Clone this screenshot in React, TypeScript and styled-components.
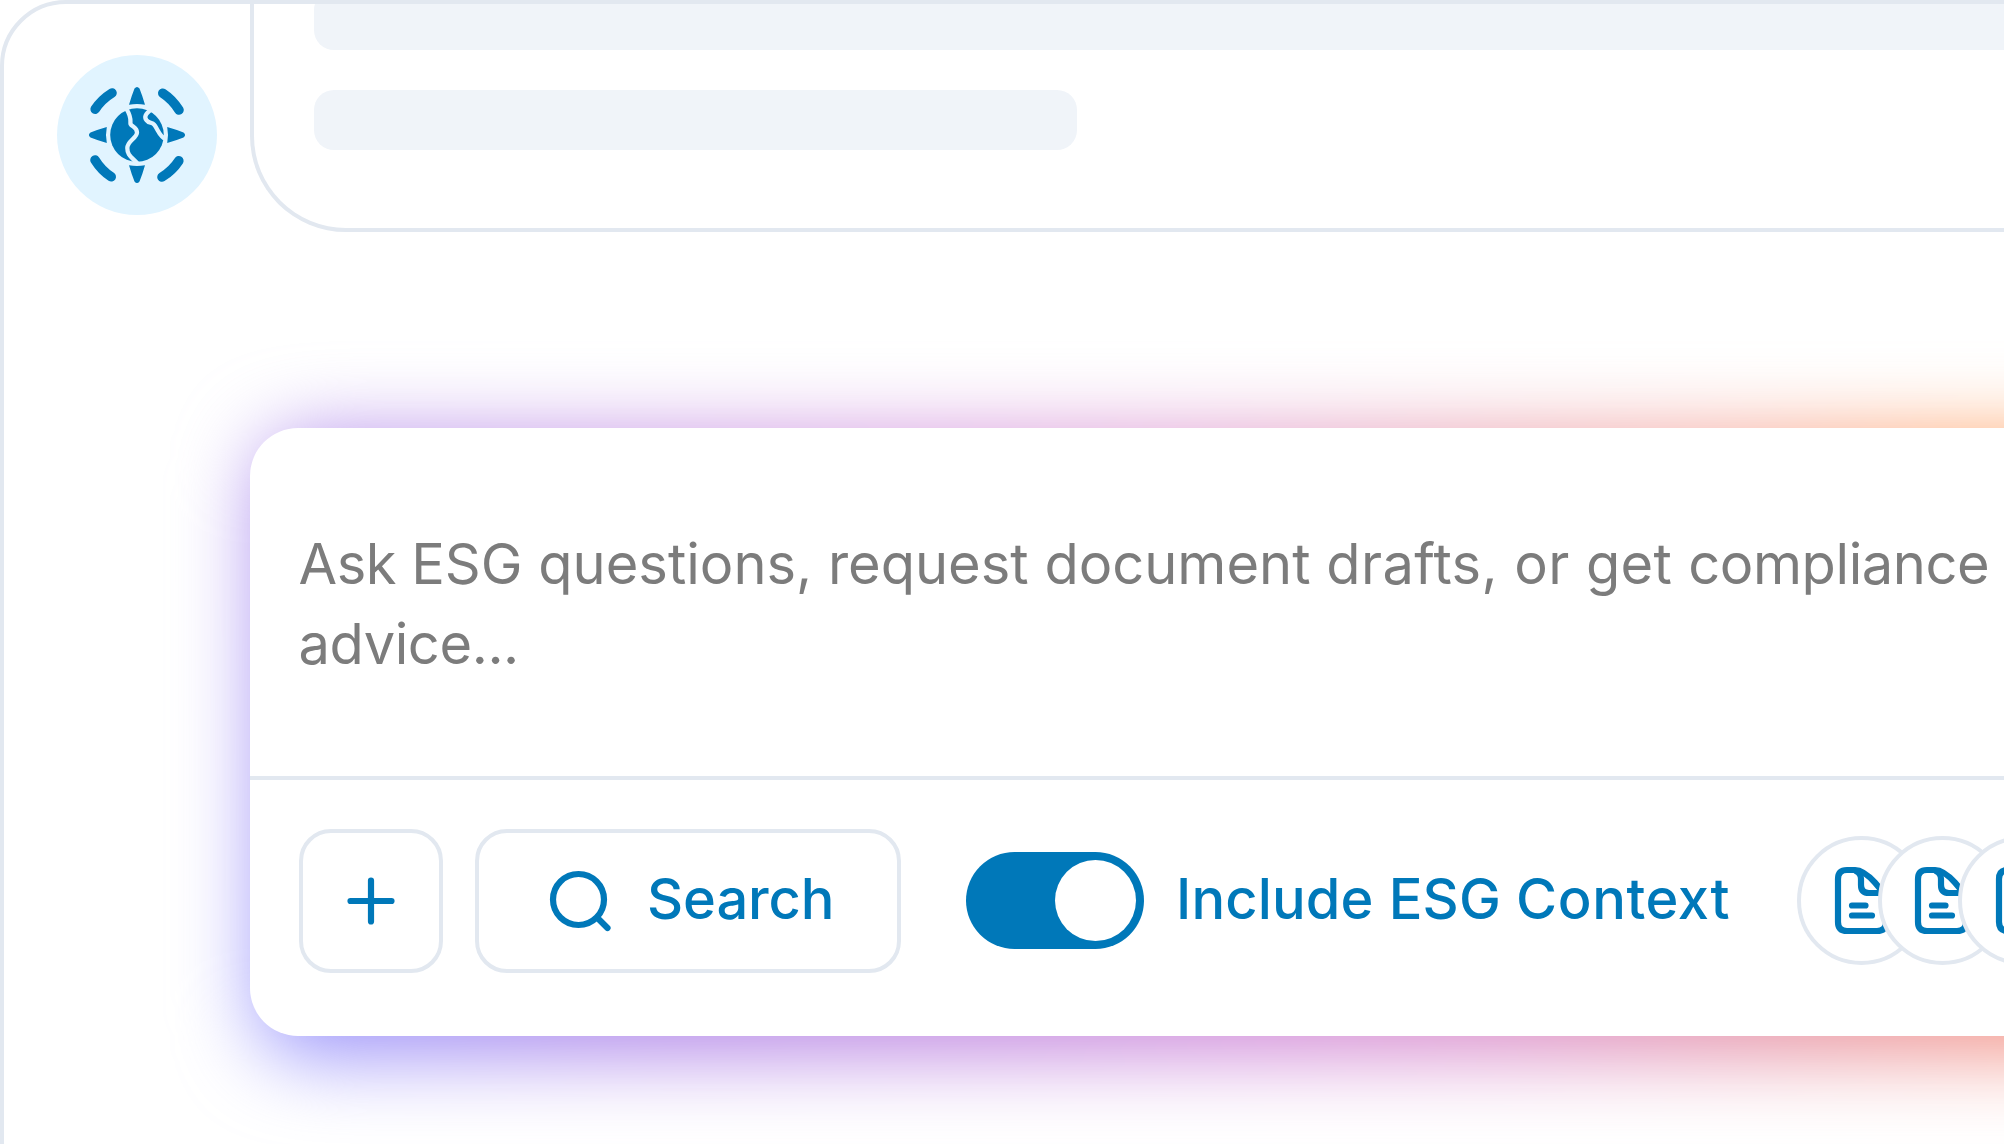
import React from "react";
import styled, { createGlobalStyle } from "styled-components";

const blue = "#0078b9";
const line = "#e2e8f0";
const pale = "#e1f4ff";

const GlobalStyle = createGlobalStyle`
  *, *::before, *::after { box-sizing: border-box; }
  html, body { margin: 0; background: #fff; overflow: hidden; }
  body { font-family: Inter, "Liberation Sans", sans-serif; }
`;

const Viewport = styled.div`
  width: 2004px;
  height: 1144px;
  overflow: hidden;
`;

const Panel = styled.main`
  width: 2300px;
  height: 1400px;
  border: 4px solid ${line};
  border-radius: 66px;
  background: #fff;
  overflow: hidden;
`;

const Message = styled.section`
  display: flex;
  align-items: flex-start;
  height: 228px;
  padding-left: 53px;
`;

const Avatar = styled.div`
  flex: none;
  display: grid;
  place-items: center;
  width: 160px;
  height: 160px;
  margin: 51px 33px 0 0;
  border-radius: 50%;
  background: ${pale};
`;

const Bubble = styled.div`
  flex: 1;
  display: flex;
  flex-direction: column;
  gap: 40px;
  height: 228px;
  padding-left: 60px;
  border: solid ${line};
  border-width: 0 0 4px 4px;
  border-bottom-left-radius: 96px;
`;

const Bar = styled.div<{ $width: number }>`
  flex: none;
  width: ${(p) => p.$width}px;
  height: 60px;
  border-radius: 20px;
  background: #f0f4f9;

  &:first-child {
    margin-top: -14px;
  }
`;

const Composer = styled.section`
  position: relative;
  width: 2000px;
  height: 608px;
  margin: 196px 0 0 246px;
`;

const Glow = styled.div`
  position: absolute;
  inset: 8px 8px -20px 8px;
  border-radius: 48px;
  background: linear-gradient(
    62deg,
    #9396ff 0%,
    #b088ea 17%,
    #d08ad9 44%,
    #d98ccb 54%,
    #e893a0 68%,
    #f29890 76%,
    #ff9f64 87%,
    #ffaa64 100%
  );
  filter: blur(40px);
`;

const Card = styled.div`
  position: relative;
  height: 100%;
  display: flex;
  flex-direction: column;
  border-radius: 48px;
  background: #fff;
`;

const Prompt = styled.p`
  flex: none;
  width: 1800px;
  height: 348px;
  margin: 0;
  padding: 96px 0 0 48.500px;
  color: #7c7c7c;
  font-size: 56px;
  line-height: 80px;
`;

const Word = styled.span<{ $tracking: number }>`
  letter-spacing: ${(p) => p.$tracking}px;
`;

const Toolbar = styled.div`
  display: flex;
  align-items: center;
  height: 252px;
  padding: 0 48px 7px 49px;
  border-top: 4px solid ${line};
`;

const Button = styled.button<{ $width: number }>`
  flex: none;
  display: flex;
  align-items: center;
  justify-content: center;
  width: ${(p) => p.$width}px;
  height: 144px;
  margin-right: 32px;
  padding: 0;
  border: 4px solid ${line};
  border-radius: 32px;
  background: #fff;
`;

const SearchButton = styled(Button)`
  justify-content: flex-start;
  padding-left: 69px;
`;

const Label = styled.span`
  flex: none;
  padding-bottom: 4px;
  color: ${blue};
  font: 500 56px/80px Inter, "Liberation Sans", sans-serif;
  white-space: nowrap;
`;

const SearchLabel = styled(Label)`
  margin-left: 35px;
  letter-spacing: -0.1px;
`;

const ToggleLabel = styled(Label)`
  width: 653px;
  padding-left: 32px;
`;

const Toggle = styled.div`
  flex: none;
  display: flex;
  justify-content: flex-end;
  width: 178px;
  height: 97px;
  margin-left: 33px;
  padding: 8px;
  border-radius: 49px;
  background: ${blue};
`;

const Knob = styled.span`
  width: 81px;
  height: 81px;
  border-radius: 50%;
  background: #fff;
`;

const Sources = styled.div`
  display: flex;
  flex: none;
`;

const Source = styled.div`
  flex: none;
  display: grid;
  place-items: center;
  width: 129px;
  height: 129px;
  margin-right: -48.4px;
  border: 4px solid ${line};
  border-radius: 50%;
  background: #fff;
`;

const Icon = styled.svg`
  display: block;
  flex: none;
  overflow: visible;
`;

const DocIcon = () => (
  <Icon width="54" height="67" viewBox="0 0 54 67" fill="none" stroke={blue} strokeWidth="6.200" strokeLinecap="round" strokeLinejoin="round">
    <path d="M3 12Q3 3 12 3H20C32 3 51 26 51 35V55Q51 64 42 64H12Q3 64 3 55Z" />
    <path d="M21 4Q26 6 26 12V18Q26 26 34 26H48" />
    <path d="M17 38.500H30.500M17 48.500H37" />
  </Icon>
);

const GlobeIcon = () => (
  <Icon width="96" height="96" viewBox="-48 -48 96 96" fill={blue}>
    {[0, 90, 180, 270].map((a) => (
      <g key={a} transform={`rotate(${a})`}>
        <path d="M-2.500-46.500Q0-49.700 2.500-46.500Q5.500-39 8-30.200Q0-31.800-8-30.200Q-5.500-39-2.500-46.500Z" />
        <path d="M25.800-41.800Q35.500-35.500 42-25" fill="none" stroke={blue} strokeWidth="9.600" strokeLinecap="round" />
      </g>
    ))}
    <circle r="26.800" />
    <g fill="none" stroke={pale} strokeWidth="4.300" strokeLinejoin="round">
      <path d="M-10.500-26C-5-17-7-14-6.500-11C-5-8 0-8 0-2.500C0 3-9.700 6-9.700 13C-9.700 20-6 21.500 1 29" />
      <path d="M15-26C8-21 7-18 9.500-14.700C12-11 15-14 17.500-10C21-5 23 2 28.500 4" />
    </g>
  </Icon>
);

const promptWords: [string, number][] = [
  ["Ask ", -0.5],
  ["ESG questions, request document ", 0],
  ["drafts, ", 0.4],
  ["or ", 0.4],
  ["get ", 0.3],
  ["compliance", -0.4],
  [" ", 0],
  ["advice...", -0.42],
];

export default function App() {
  return (
    <Viewport>
      <GlobalStyle />
      <Panel>
        <Message>
          <Avatar>
            <GlobeIcon />
          </Avatar>
          <Bubble>
            <Bar $width={1800} />
            <Bar $width={763} />
          </Bubble>
        </Message>
        <Composer>
          <Glow />
          <Card>
            <Prompt>
              {promptWords.map(([text, tracking]) => (
                <Word key={text} $tracking={tracking}>
                  {text}
                </Word>
              ))}
            </Prompt>
            <Toolbar>
              <Button $width={144} aria-label="Add">
                <Icon width="48" height="48" viewBox="0 0 48 48" stroke={blue} strokeWidth="6.200" strokeLinecap="round">
                  <path d="M3.500 24H44.500M24 3.500V44.500" />
                </Icon>
              </Button>
              <SearchButton $width={426}>
                <Icon width="64" height="64" viewBox="0 0 64 64" fill="none" stroke={blue} strokeWidth="6.200" strokeLinecap="round">
                  <circle cx="30.500" cy="30.500" r="25.500" />
                  <path d="M50 49.500L59.500 59" />
                </Icon>
                <SearchLabel>Search</SearchLabel>
              </SearchButton>
              <Toggle>
                <Knob />
              </Toggle>
              <ToggleLabel>
                <Word $tracking={0.15}>Include ESG </Word>
                <Word $tracking={0.6}>Context</Word>
              </ToggleLabel>
              <Sources>
                {[0, 1, 2].map((n) => (
                  <Source key={n}>
                    <DocIcon />
                  </Source>
                ))}
              </Sources>
            </Toolbar>
          </Card>
        </Composer>
      </Panel>
    </Viewport>
  );
}
